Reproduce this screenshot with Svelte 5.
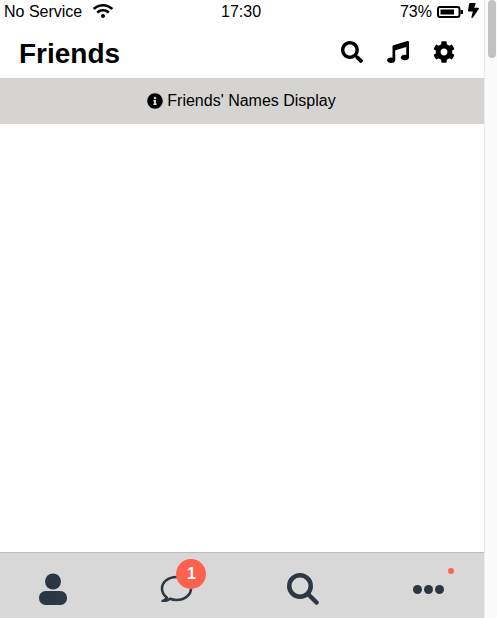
<script>
  const tabDots = [5.5, 16.5, 27.5];
</script>

<div class="page">
  <div class="screen">
    <div class="status">
      <div class="status-left">
        <span>No Service</span>
        <svg class="wifi" viewBox="0 0 640 512"><path d="M634.91 154.88C457.74-8.99 182.19-8.93 5.09 154.88c-6.66 6.16-6.79 16.59-.35 22.98l34.24 33.97c6.14 6.1 16.02 6.23 22.4.38 145.92-133.68 371.3-133.71 517.25 0 6.38 5.85 16.26 5.71 22.4-.38l34.24-33.97c6.43-6.39 6.3-16.82-.36-22.98zM320 352c-35.35 0-64 28.65-64 64s28.65 64 64 64 64-28.65 64-64-28.65-64-64-64zm202.67-83.59c-115.26-101.93-290.21-101.82-405.34 0-6.9 6.1-7.12 16.69-.57 23.15l34.44 33.99c6 5.92 15.66 6.32 22.05.8 83.95-72.57 209.74-72.41 293.49 0 6.39 5.52 16.05 5.13 22.05-.8l34.44-33.99c6.56-6.46 6.33-17.06-.56-23.15z"/></svg>
      </div>
      <span class="clock">17:30</span>
      <div class="status-right">
        <span>73%</span>
        <svg class="battery" viewBox="0 0 26 12">
          <rect x="1" y="1" width="21.5" height="10" rx="2" fill="none" stroke="#000" stroke-width="2"/>
          <rect x="3.5" y="3.5" width="13.5" height="5"/>
          <rect x="23.5" y="4" width="2.5" height="4" rx="0.5"/>
        </svg>
        <svg class="bolt" viewBox="0 0 320 512" preserveAspectRatio="none"><path d="M296 160H180.6l42.6-129.8C227.2 15 215.7 0 200 0H56C44 0 33.8 8.9 32.2 20.8l-32 240C-1.7 275.2 9.5 288 24 288h118.7L96.6 482.5c-3.6 15.2 8 29.5 23.3 29.5 8.4 0 16.4-4.4 20.8-12l176-304c9.3-15.9-2.2-36-20.7-36z"/></svg>
      </div>
    </div>

    <header class="nav">
      <h1>Friends</h1>
      <div class="nav-icons">
        <svg viewBox="0 0 512 512"><path d="M505 442.7L405.3 343c-4.5-4.5-10.6-7-17-7H372c27.6-35.3 44-79.7 44-128C416 93.1 322.9 0 208 0S0 93.1 0 208s93.1 208 208 208c48.3 0 92.7-16.4 128-44v16.3c0 6.4 2.5 12.5 7 17l99.7 99.7c9.4 9.4 24.6 9.4 33.9 0l28.3-28.3c9.4-9.4 9.4-24.6.1-34zM208 336c-70.7 0-128-57.2-128-128 0-70.7 57.2-128 128-128 70.7 0 128 57.2 128 128 0 70.7-57.2 128-128 128z"/></svg>
        <svg viewBox="0 0 512 512"><path d="M470.38 1.51L150.41 96A32 32 0 0 0 128 126.51v261.41A139 139 0 0 0 96 384c-53 0-96 28.66-96 64s43 64 96 64 96-28.66 96-64V214.32l256-75v184.61a138.4 138.4 0 0 0-32-3.93c-53 0-96 28.66-96 64s43 64 96 64 96-28.65 96-64V32a32 32 0 0 0-41.62-30.49z"/></svg>
        <svg viewBox="0 0 512 512"><path d="M487.4 315.7l-42.6-24.6c4.3-23.2 4.3-47 0-70.2l42.6-24.6c4.9-2.8 7.1-8.6 5.5-14-11.1-35.6-30-67.8-54.7-94.6-3.8-4.1-10-5.1-14.8-2.3L380.8 110c-17.9-15.4-38.5-27.3-60.8-35.1V25.8c0-5.6-3.9-10.5-9.4-11.7-36.7-8.2-74.3-7.8-109.2 0-5.5 1.2-9.4 6.1-9.4 11.7V75c-22.2 7.9-42.8 19.8-60.8 35.1L88.7 85.5c-4.9-2.8-11-1.9-14.8 2.3-24.7 26.7-43.6 58.9-54.7 94.6-1.7 5.4.6 11.2 5.5 14L67.3 221c-4.3 23.2-4.3 47 0 70.2l-42.6 24.6c-4.9 2.8-7.1 8.6-5.5 14 11.1 35.6 30 67.8 54.7 94.6 3.8 4.1 10 5.1 14.8 2.3l42.6-24.6c17.9 15.4 38.5 27.3 60.8 35.1v49.2c0 5.6 3.9 10.5 9.4 11.7 36.7 8.2 74.3 7.8 109.2 0 5.5-1.2 9.4-6.1 9.4-11.7v-49.2c22.2-7.9 42.8-19.8 60.8-35.1l42.6 24.6c4.9 2.8 11 1.9 14.8-2.3 24.7-26.7 43.6-58.9 54.7-94.6 1.5-5.5-.7-11.3-5.6-14.1zM256 336c-44.1 0-80-35.9-80-80s35.9-80 80-80 80 35.9 80 80-35.9 80-80 80z"/></svg>
      </div>
    </header>

    <div class="notice">
      <svg class="info" viewBox="0 0 512 512"><path d="M256 8C119.043 8 8 119.083 8 256c0 136.997 111.043 248 248 248s248-111.003 248-248C504 119.083 392.957 8 256 8zm0 110c23.196 0 42 18.804 42 42s-18.804 42-42 42-42-18.804-42-42 18.804-42 42-42zm56 254c0 6.627-5.373 12-12 12h-88c-6.627 0-12-5.373-12-12v-24c0-6.627 5.373-12 12-12h12v-64h-12c-6.627 0-12-5.373-12-12v-24c0-6.627 5.373-12 12-12h64c6.627 0 12 5.373 12 12v100h12c6.627 0 12 5.373 12 12v24z"/></svg>
      <span>Friends' Names Display</span>
    </div>

    <main class="content"></main>

    <nav class="tabs">
      <div class="tab">
        <svg class="tab-user" viewBox="0 0 28 32">
          <circle cx="14" cy="8.500" r="8"/>
          <rect x="0" y="18" width="28" height="14" rx="6.500"/>
        </svg>
      </div>
      <div class="tab">
        <svg class="tab-chat" viewBox="0 0 33 28">
          <path d="M2.500 27.200c2-.8 3.500-2.200 4.300-3.700C3.800 21.300 2 18 2 14.500 2 8 8.500 3 16.500 3S31 8 31 14.500 24.500 26 16.500 26c-2.500 0-4.500-.4-6.500-1.200-2 1.500-4.500 2.400-7.500 2.400z" fill="none" stroke-width="2.600" stroke-linejoin="round"/>
        </svg>
        <span class="badge">1</span>
      </div>
      <div class="tab">
        <svg class="tab-search" viewBox="0 0 32 32">
          <circle cx="13" cy="13" r="10.750" fill="none" stroke-width="4.500"/>
          <line x1="21.500" y1="21.500" x2="29.500" y2="29.500" stroke-width="4.500" stroke-linecap="round"/>
        </svg>
      </div>
      <div class="tab">
        <svg class="tab-more" viewBox="0 0 33 9">
          {#each tabDots as cx}
            <circle {cx} cy="4.500" r="4.500"/>
          {/each}
        </svg>
        <span class="dot"></span>
      </div>
    </nav>
  </div>

  <aside class="scrollbar"><div class="thumb"></div></aside>
</div>

<style>
  :global(body) {
    margin: 0;
    background: #fff;
  }

  .page {
    display: flex;
    width: 497px;
    height: 618px;
    overflow: hidden;
    font-family: "Liberation Sans", Arial, sans-serif;
    color: #000;
  }

  .screen {
    flex: 1;
    min-width: 0;
    display: flex;
    flex-direction: column;
  }

  .status {
    display: flex;
    align-items: center;
    justify-content: space-between;
    position: relative;
    height: 23px;
    padding: 0 5px 0 4px;
    font-size: 16px;
  }

  .status-left {
    display: flex;
    align-items: center;
    gap: 11px;
  }

  .status-right {
    display: flex;
    align-items: center;
    gap: 5px;
  }

  .clock {
    position: absolute;
    left: 221px;
  }

  .wifi {
    width: 20px;
    height: 16px;
    margin-bottom: 2px;
  }

  .battery {
    width: 26px;
    height: 12px;
  }

  .bolt {
    width: 11px;
    height: 15px;
    margin-bottom: 2px;
  }

  .nav {
    display: flex;
    align-items: center;
    justify-content: space-between;
    height: 55px;
    padding: 0 29px 0 19px;
  }

  h1 {
    margin: 6px 0 0;
    font-size: 28px;
    font-weight: 700;
  }

  .nav-icons {
    display: flex;
    gap: 24px;
    margin-top: 2px;
  }

  .nav-icons svg {
    display: block;
    width: 22px;
    height: 22px;
  }

  .notice {
    display: flex;
    align-items: center;
    justify-content: center;
    gap: 4px;
    height: 46px;
    padding-right: 1px;
    background: #d5d4d3;
    font-size: 16px;
  }

  .info {
    width: 16px;
    height: 16px;
  }

  .content {
    flex: 1;
  }

  .tabs {
    display: flex;
    align-items: flex-start;
    justify-content: space-between;
    height: 66px;
    padding: 0 39px;
    box-sizing: border-box;
    background: #d8d8d8;
    border-top: 1px solid #bbb;
  }

  .tab {
    position: relative;
    display: flex;
  }

  .tab svg {
    fill: #2c3744;
    stroke: #2c3744;
    stroke-width: 0;
  }

  .tab-user {
    width: 28px;
    height: 32px;
    margin-top: 20px;
  }

  .tab-chat {
    width: 33px;
    height: 28px;
    margin-top: 21px;
  }

  .tab-search {
    width: 32px;
    height: 32px;
    margin-top: 20px;
  }

  .tab-more {
    width: 33px;
    height: 9px;
    margin-top: 32px;
  }

  .badge {
    position: absolute;
    top: 6px;
    left: 16px;
    width: 30px;
    height: 30px;
    border-radius: 50%;
    background: #fe624f;
    color: #fff;
    font-size: 16px;
    font-weight: 700;
    line-height: 30px;
    text-align: center;
  }

  .dot {
    position: absolute;
    top: 15px;
    left: 36px;
    width: 6px;
    height: 6px;
    border-radius: 50%;
    background: #fe624f;
  }

  .scrollbar {
    flex: none;
    width: 12px;
    border-left: 1px solid #ececec;
    background: #fafafa;
  }

  .thumb {
    width: 8px;
    height: 58px;
    margin-left: 3px;
    border-radius: 4px;
    background: #c2c2c2;
  }
</style>
